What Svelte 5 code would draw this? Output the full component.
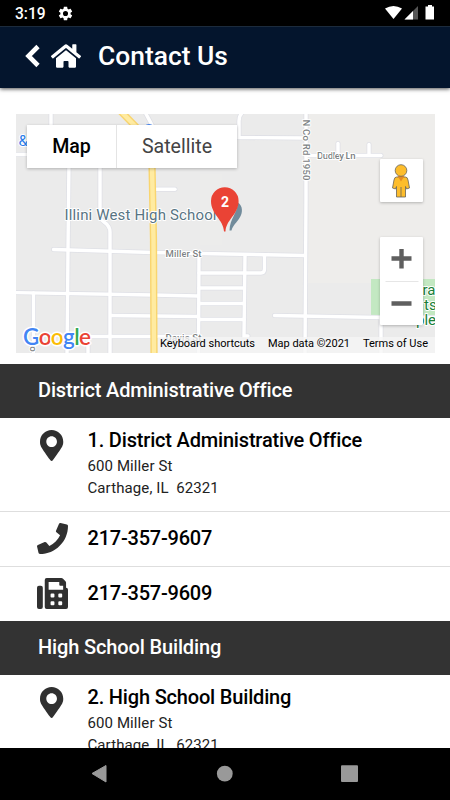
<script>
	const icons = {
		pin: {
			box: '0 0 384 512',
			path: 'M172.268 501.67C26.97 291.031 0 269.413 0 192 0 85.961 85.961 0 192 0s192 85.961 192 192c0 77.413-26.97 99.031-172.268 309.67-9.535 13.774-29.93 13.773-39.464 0zM192 280c48 0 88-40 88-88s-40-88-88-88-88 40-88 88 40 88 88 88z'
		},
		phone: {
			box: '0 0 512 512',
			path: 'M493.4 24.6l-104-24c-11.3-2.6-22.9 3.3-27.5 13.9l-48 112c-4.2 9.8-1.4 21.3 6.9 28l60.6 49.6c-36 76.7-98.9 140.5-177.2 177.2l-49.6-60.6c-6.8-8.3-18.2-11.1-28-6.9l-112 48C3.9 366.5-2 378.1.6 389.4l24 104C27.1 504.2 36.7 512 48 512c256.1 0 464-207.5 464-464 0-11.2-7.7-20.9-18.6-23.4z'
		},
		fax: {
			box: '0 0 512 512',
			path: 'M64 128H32a32 32 0 0 0-32 32v320a32 32 0 0 0 32 32h32a32 32 0 0 0 32-32V160a32 32 0 0 0-32-32zM480 160V77.25a32 32 0 0 0-9.38-22.63L425.37 9.37A32 32 0 0 0 402.75 0H160a32 32 0 0 0-32 32v448a32 32 0 0 0 32 32h320a32 32 0 0 0 32-32V192a32 32 0 0 0-32-32zM288 432a16 16 0 0 1-16 16h-32a16 16 0 0 1-16-16v-32a16 16 0 0 1 16-16h32a16 16 0 0 1 16 16zm0-128a16 16 0 0 1-16 16h-32a16 16 0 0 1-16-16v-32a16 16 0 0 1 16-16h32a16 16 0 0 1 16 16zm128 128a16 16 0 0 1-16 16h-32a16 16 0 0 1-16-16v-32a16 16 0 0 1 16-16h32a16 16 0 0 1 16 16zm0-128a16 16 0 0 1-16 16h-32a16 16 0 0 1-16-16v-32a16 16 0 0 1 16-16h32a16 16 0 0 1 16 16zm16-112H192V64h176v48a16 16 0 0 0 16 16h48z'
		}
	};

	const sections = [
		{
			name: 'District Administrative Office',
			address: ['600 Miller St', 'Carthage, IL\u00a0 62321'],
			numbers: [
				{ icon: 'phone', value: '217-357-9607' },
				{ icon: 'fax', value: '217-357-9609' }
			]
		},
		{
			name: 'High School Building',
			address: ['600 Miller St', 'Carthage, IL\u00a0 62321'],
			numbers: []
		}
	];

	const roads = [
		'M51 110V130', 'M69 160L68 250L67 356', 'M100 160V217Q101 220 104 222Q110 226 110 232V356',
		'M145 112L153 127', 'M10 154.5H30', 'M156 189.3H175',
		'M243 112Q239 115 239 121V137.500L305 138', 'M306 110V200L305 356',
		'M306 155.500H381', 'M338 143.500V155', 'M369 144.500V155',
		'M53.500 249.500L153 252.500L227 254L305 255.500',
		'M10 292.500L153 295L198 296', 'M33.500 293V356', 'M111 315.500L198 316.500', 'M91 336.500H198', 'M88 337V356',
		'M199 253L198.500 356', 'M199 273H261Q264.500 273 264.500 269V255', 'M199 288H244', 'M199 303.500H244', 'M199 319.500H244',
		'M245 255L244 336H248', 'M274.500 315.500L381 317.500H440', 'M381 317V356'
	];
</script>

{#snippet icon(name)}
	<svg class="icon" viewBox={icons[name].box}>
		<path fill-rule="evenodd" d={icons[name].path} />
	</svg>
{/snippet}

<div class="screen">
	<div class="status">
		<span class="time">3:19</span>
		<svg class="cog" viewBox="0 0 24 24">
			<path d="M19.140 12.940c.040-.300.060-.610.060-.940 0-.320-.020-.640-.070-.940l2.030-1.580c.180-.140.230-.410.120-.610l-1.920-3.320c-.120-.220-.370-.290-.590-.220l-2.390.960c-.500-.380-1.030-.700-1.620-.940l-.360-2.540c-.040-.240-.240-.410-.480-.410h-3.840c-.240 0-.430.170-.470.410l-.360 2.540c-.590.240-1.130.570-1.620.940l-2.390-.960c-.220-.080-.470 0-.590.220L2.740 8.870c-.120.210-.080.470.120.610l2.030 1.580c-.050.300-.090.630-.090.940s.020.640.070.940l-2.030 1.580c-.180.140-.230.410-.120.610l1.920 3.320c.120.220.370.290.590.220l2.390-.960c.500.380 1.030.700 1.620.940l.360 2.540c.050.240.240.410.480.410h3.840c.240 0 .440-.170.470-.410l.360-2.540c.590-.240 1.130-.560 1.620-.940l2.390.960c.220.080.470 0 .590-.220l1.920-3.320c.120-.220.070-.470-.120-.610zM12 15.600a3.600 3.600 0 1 1 0-7.200 3.600 3.600 0 0 1 0 7.200z" />
		</svg>
		<svg class="signals" viewBox="384 4 54 18">
			<path d="M385 8.500Q393.500 3.500 402 8.500L393.500 19Z" fill="#fff" />
			<path d="M404.500 19.500L418 6V19.500Z" fill="#555" />
			<path d="M404.500 19.500L413 11V19.500Z" fill="#fff" />
			<path d="M428 5H432V6.500H434V19.500H425.500V6.500H428Z" fill="#fff" />
		</svg>
	</div>

	<div class="header">
		<svg class="chevron" viewBox="0 0 16 24">
			<path d="M14 2.500L4.500 12L14 21.500" />
		</svg>
		<svg class="home" viewBox="0 32 576 448">
			<path d="M280.370 148.260L96 300.110V464a16 16 0 0 0 16 16l112.060-.290a16 16 0 0 0 15.920-16V368a16 16 0 0 1 16-16h64a16 16 0 0 1 16 16v95.640a16 16 0 0 0 16 16.050L464 480a16 16 0 0 0 16-16V300L295.670 148.260a12.190 12.190 0 0 0-15.300 0zM571.600 251.470L488 182.560V44.050a12 12 0 0 0-12-12h-56a12 12 0 0 0-12 12v72.610L318.470 43a48 48 0 0 0-61 0L4.340 251.470a12 12 0 0 0-1.600 16.900l25.500 31A12 12 0 0 0 45.150 301l235.220-193.740a12.190 12.190 0 0 1 15.300 0L530.900 301a12 12 0 0 0 16.900-1.600l25.500-31a12 12 0 0 0-1.700-16.930z" />
		</svg>
		<h1>Contact Us</h1>
	</div>

	<div class="content">
		<div class="map">
			<svg class="tiles" viewBox="16 114 419 239">
				<rect x="16" y="114" width="419" height="239" fill="#ebebeb" />
				<path d="M306 114H435V283H306Z" fill="#eeedeb" />
				<path d="M200 174H222V245H200Z" fill="#eeedeb" opacity=".5" />
				<path d="M371 279H435V318H371Z" fill="#c3e8c2" />
				{#each roads as road}
					<path class="road-edge" d={road} />
				{/each}
				{#each roads as road}
					<path class="road" d={road} />
				{/each}
				<path class="highway-edge" d="M119.500 110L139 130Q151 143 152 165L153.500 240L154 356" />
				<path class="highway" d="M119.500 110L139 130Q151 143 152 165L153.500 240L154 356" />
				<circle cx="149" cy="130" r="6" fill="#4285f4" />
				<text class="blue" x="18.500" y="146">&amp;</text>
				<path d="M229.500 230.500C230 218 237 214 238 202.500C243 206 243 213 239.500 218C236.500 223 233 225 231.500 230.500Z" fill="#718b9b" />
				<text class="poi" x="64.500" y="220" textLength="152">Illini West High School</text>
				<text class="street" x="165.500" y="257" textLength="36">Miller St</text>
				<text class="street" x="165.500" y="340.500" textLength="36">Davis St</text>
				<text class="street" x="317" y="158.500" textLength="38.500">Dudley Ln</text>
				<text class="street" transform="translate(303 119.500) rotate(90)" textLength="61">N Co Rd 1950</text>
				<text class="street" transform="translate(30 343) rotate(90)">ro</text>
				<g class="park">
					<text x="422.500" y="295">ra</text>
					<text x="424" y="310">ts</text>
					<text x="416" y="325">ple</text>
				</g>
				<path d="M224 231.500C223.500 219.500 211 214.500 211 201A13.800 13.800 0 0 1 238.600 201C238.600 214.500 226 219.500 225.500 231.500Z" fill="#ea4335" />
				<text class="marker" x="225" y="206.500">2</text>
				<rect x="158" y="337" width="277" height="16" fill="#f5f5f5" opacity=".75" />
				<text class="google" x="23" y="345" textLength="68"><tspan fill="#4285f4">G</tspan><tspan fill="#ea4335">o</tspan><tspan fill="#fbbc05">o</tspan><tspan fill="#4285f4">g</tspan><tspan fill="#34a853">l</tspan><tspan fill="#ea4335">e</tspan></text>
				<g class="legal">
					<text x="160" y="346.500" textLength="95">Keyboard shortcuts</text>
					<text x="268" y="346.500" textLength="82">Map data ©2021</text>
					<text x="363" y="346.500" textLength="65">Terms of Use</text>
				</g>
			</svg>
			<div class="types">
				<button class="active">Map</button>
				<button>Satellite</button>
			</div>
			<button class="pegman">
				<svg viewBox="0 0 20 36">
					<path d="M5.500 14H14.500Q16.500 14 17 17L18.500 25L15.500 26L14.500 23.500V34H5.500V23.500L4.500 26L1.500 25L3 17Q3.500 14 5.500 14Z" />
					<path d="M10 24V34" />
					<path class="shade" d="M6.500 13H13.500L10 18.500Z" />
					<circle cx="10" cy="7.500" r="5.800" />
				</svg>
			</button>
			<div class="zoom">
				<svg viewBox="0 0 43 88">
					<path d="M11.500 21.500H31.500M21.500 12V31.500M11.500 66.500H31.500" stroke="#5f5f5f" stroke-width="4.400" />
					<path d="M5.500 44.500H38.500" stroke="#e6e6e6" />
				</svg>
			</div>
		</div>

		{#each sections as section, i}
			<h2>{section.name}</h2>
			<div class="row address">
				<div class="icon-col">{@render icon('pin')}</div>
				<div>
					<h3>{i + 1}. {section.name}</h3>
					{#each section.address as line}
						<p>{line}</p>
					{/each}
				</div>
			</div>
			{#each section.numbers as number}
				<div class="row">
					<div class="icon-col">{@render icon(number.icon)}</div>
					<h3 class="number">{number.value}</h3>
				</div>
			{/each}
		{/each}
	</div>

	<div class="nav">
		<svg viewBox="0 0 450 52">
			<path d="M92 25.500L106 17.500V34Z" stroke="#999" stroke-linejoin="round" />
			<circle cx="224.800" cy="25.700" r="7.900" />
			<rect x="341" y="17.300" width="17" height="16.800" rx="1" />
		</svg>
	</div>
</div>

<style>
	:global(body) {
		margin: 0;
		background: #fff;
	}

	.screen {
		width: 450px;
		height: 800px;
		display: flex;
		flex-direction: column;
		overflow: hidden;
		font-family: Roboto, sans-serif;
		color: #000;
	}

	h1, h2, h3, p {
		margin: 0;
		font-weight: 500;
	}

	svg {
		display: block;
	}

	.status {
		height: 26px;
		flex-shrink: 0;
		display: flex;
		align-items: center;
		background: #000;
		color: #fff;
		padding: 1px 12px 0 15px;
		box-sizing: border-box;
	}

	.time {
		width: 42px;
		font-size: 15.6px;
		font-weight: 500;
		line-height: 26px;
	}

	.cog {
		width: 17px;
		height: 17px;
		margin-top: -1px;
		fill: #fff;
	}

	.signals {
		width: 54px;
		height: 18px;
		margin: -1px 0 0 auto;
	}

	.header {
		height: 62px;
		flex-shrink: 0;
		box-sizing: border-box;
		display: flex;
		align-items: center;
		padding: 0 24px 4px;
		background: #04152d;
		border-top: 1px solid #1c2b3c;
		color: #fff;
		box-shadow: 0 1px 4px rgba(0, 0, 0, 0.7);
		z-index: 1;
	}

	.chevron {
		width: 16px;
		height: 24px;
		margin-right: 11px;
		fill: none;
		stroke: #fff;
		stroke-width: 4.6;
	}

	.home {
		width: 30px;
		height: 24px;
		margin-right: 17px;
		fill: #fff;
	}

	h1 {
		font-size: 26.4px;
		line-height: 32px;
	}

	.content {
		flex: 1;
		min-height: 0;
		overflow: hidden;
	}

	.map {
		position: relative;
		width: 419px;
		height: 239px;
		margin: 26px 15px 11px 16px;
	}

	.tiles {
		width: 419px;
		height: 239px;
	}

	.road-edge, .road, .highway-edge, .highway {
		fill: none;
		stroke-linecap: round;
		stroke: #dfe0e6;
		stroke-width: 5;
	}

	.road {
		stroke: #fff;
		stroke-width: 3.4;
	}

	.highway-edge {
		stroke: #f9d56f;
		stroke-width: 7.2;
	}

	.highway {
		stroke: #ffeba1;
		stroke-width: 4.4;
	}

	.tiles text {
		paint-order: stroke;
		stroke: #fff;
		stroke-width: 2px;
		stroke-linejoin: round;
	}

	.tiles .street {
		font-size: 9.6px;
		font-weight: 500;
		fill: #7d8284;
	}

	.tiles .poi {
		font-size: 15px;
		fill: #587483;
	}

	.tiles .blue {
		font-size: 15px;
		fill: #2b7de9;
	}

	.park {
		font-size: 15px;
		fill: #188038;
	}

	.tiles .marker {
		font-size: 14px;
		font-weight: 700;
		fill: #fff;
		stroke: none;
		text-anchor: middle;
	}

	.tiles .google {
		font-family: Lato, sans-serif;
		font-size: 22.5px;
		font-weight: 600;
		stroke-width: 3px;
	}

	.legal {
		font-size: 11px;
		fill: #000;
	}

	.tiles .legal text {
		stroke: none;
	}

	button {
		border: 0;
		padding: 0;
		background: #fff;
		font-family: inherit;
	}

	.types {
		position: absolute;
		left: 11px;
		top: 11px;
		display: flex;
		height: 43px;
		box-shadow: 0 1px 3px rgba(0, 0, 0, 0.25);
	}

	.types button {
		width: 120px;
		font-size: 19.6px;
		color: #444;
	}

	.types .active {
		width: 90px;
		font-weight: 500;
		color: #000;
		border-right: 1px solid #e4e4e4;
	}

	.pegman, .zoom {
		position: absolute;
		left: 364px;
		top: 45px;
		width: 43px;
		height: 43px;
		display: grid;
		place-items: center;
		background: #fff;
		border-radius: 1px;
		box-shadow: 0 1px 3px rgba(0, 0, 0, 0.25);
	}

	.pegman svg {
		width: 20px;
		height: 36px;
		margin-right: 2px;
		fill: #fdbd2c;
		stroke: #66635a;
		stroke-width: 0.8;
	}

	.pegman .shade {
		fill: #e58b22;
		stroke: none;
	}

	.zoom {
		top: 123px;
		height: 88px;
	}

	.zoom svg {
		width: 43px;
		height: 88px;
	}

	h2 {
		height: 54px;
		padding-left: 38px;
		background: #333;
		color: #fff;
		font-size: 20px;
		letter-spacing: -0.14px;
		line-height: 53px;
	}

	h3 {
		font-size: 20px;
		letter-spacing: -0.18px;
		line-height: 24px;
	}

	.number {
		letter-spacing: -0.22px;
		margin-top: -2px;
	}

	.row {
		display: flex;
		box-sizing: border-box;
		height: 54.5px;
		align-items: center;
		border-bottom: 1px solid #dedede;
	}

	.row:has(+ h2) {
		border-bottom: 0;
	}

	.address {
		height: 94px;
		align-items: flex-start;
		padding-top: 9.5px;
	}

	.icon-col {
		width: 72px;
		padding-left: 32px;
		box-sizing: border-box;
		margin-right: 15.5px;
		display: flex;
		justify-content: center;
	}

	.icon {
		height: 31px;
		flex-shrink: 0;
		fill: #303030;
	}

	.address .icon {
		margin-top: 2px;
	}

	p {
		font-size: 15px;
		font-weight: 400;
		letter-spacing: 0.1px;
		line-height: 22px;
		color: #222;
	}

	.address h3 {
		margin-bottom: 3px;
	}

	.nav {
		height: 52px;
		flex-shrink: 0;
		background: #000;
	}

	.nav svg {
		width: 450px;
		height: 52px;
		fill: #999;
	}
</style>
